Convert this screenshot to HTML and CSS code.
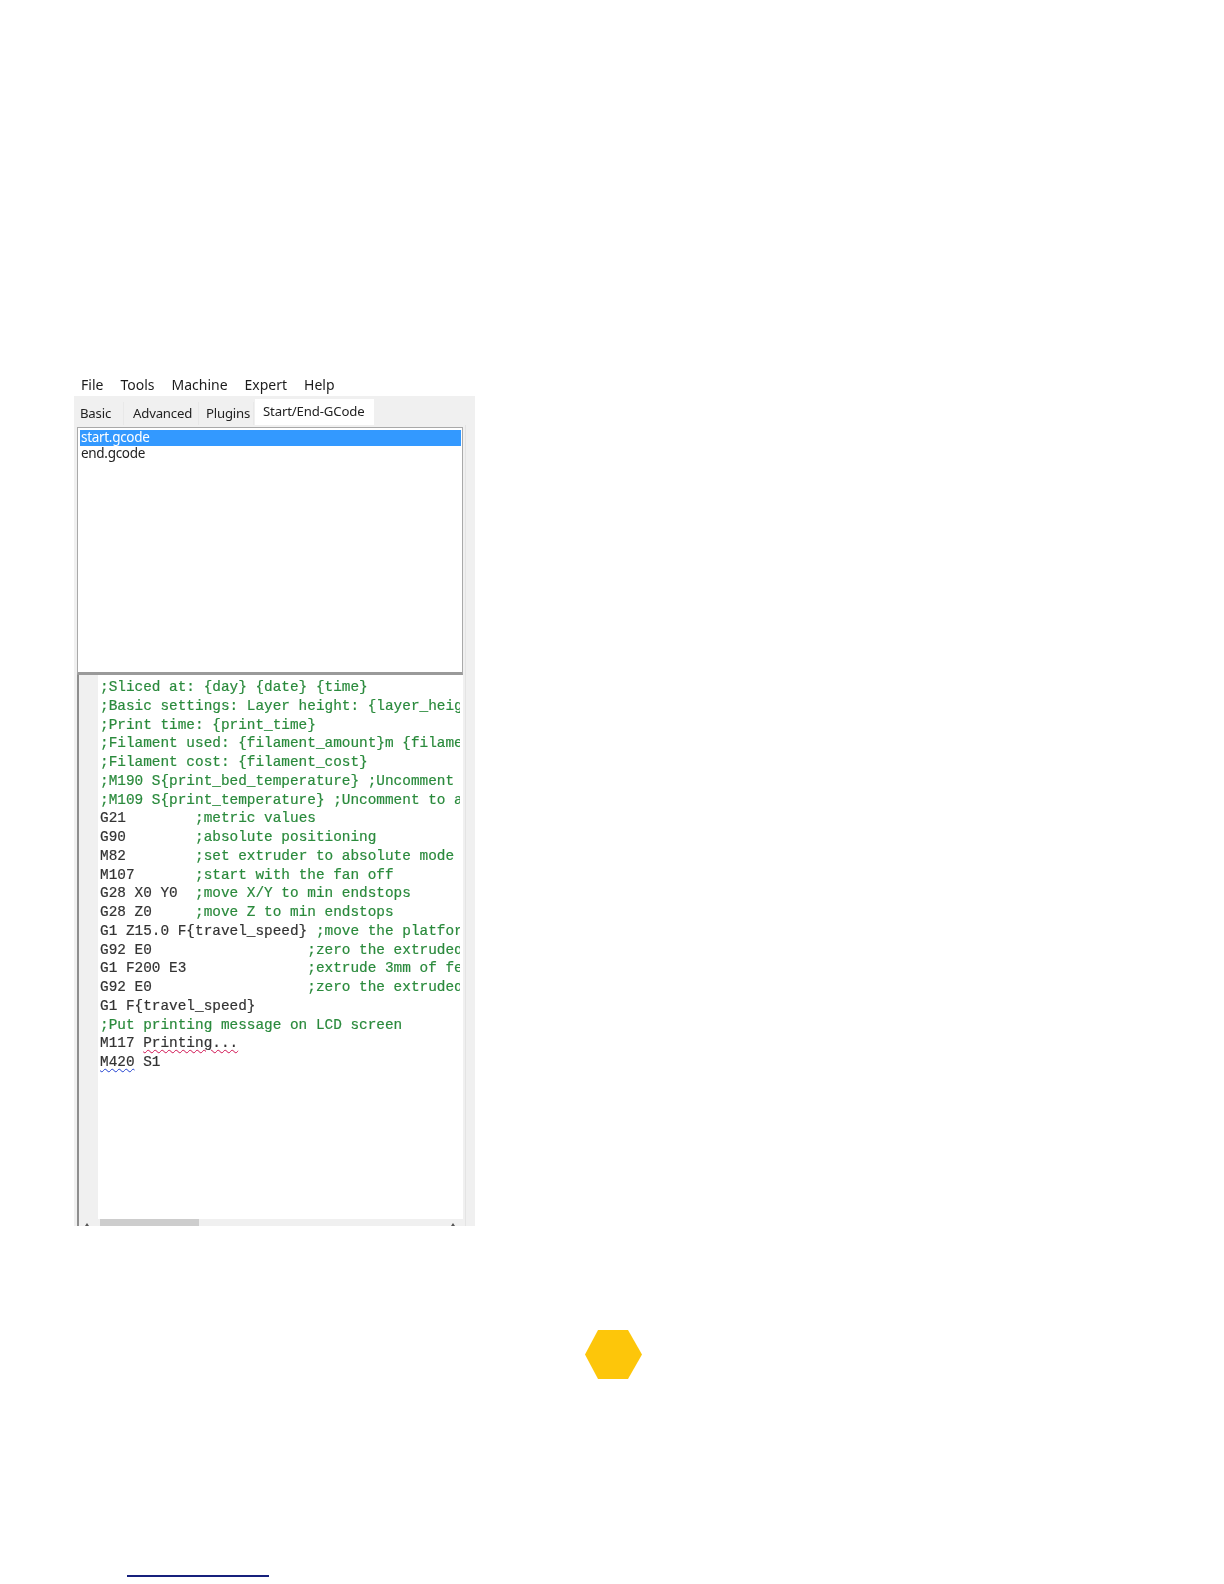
FILE: index.html
```html
<!DOCTYPE html>
<html lang="en">
<head>
<meta charset="utf-8">
<title>Start/End-GCode</title>
<link rel="stylesheet" href="styles.css">
</head>
<body>
<main class="page">
  <section class="shot">
    <nav class="menu">
      <span>File</span><span>Tools</span><span>Machine</span><span>Expert</span><span>Help</span>
    </nav>
    <div class="window">
      <div class="tabs">
        <div class="tab tab-basic">Basic</div>
        <div class="tab tab-advanced">Advanced</div>
        <div class="tab tab-plugins">Plugins</div>
        <div class="tab tab-active">Start/End-GCode</div>
      </div>
      <div class="pane">
        <ul class="files">
          <li class="file selected">start.gcode</li>
          <li class="file">end.gcode</li>
        </ul>
        <div class="editor">
          <div class="gutter"></div>
          <div class="code-wrap">
            <div class="code">
              <div class="line c">;Sliced at: {day} {date} {time}</div>
              <div class="line c">;Basic settings: Layer height: {layer_height}</div>
              <div class="line c">;Print time: {print_time}</div>
              <div class="line c">;Filament used: {filament_amount}m {filament_weight}</div>
              <div class="line c">;Filament cost: {filament_cost}</div>
              <div class="line c">;M190 S{print_bed_temperature} ;Uncomment to</div>
              <div class="line c">;M109 S{print_temperature} ;Uncomment to add</div>
              <div class="line">G21        <span class="c">;metric values</span></div>
              <div class="line">G90        <span class="c">;absolute positioning</span></div>
              <div class="line">M82        <span class="c">;set extruder to absolute mode</span></div>
              <div class="line">M107       <span class="c">;start with the fan off</span></div>
              <div class="line">G28 X0 Y0  <span class="c">;move X/Y to min endstops</span></div>
              <div class="line">G28 Z0     <span class="c">;move Z to min endstops</span></div>
              <div class="line">G1 Z15.0 F{travel_speed} <span class="c">;move the platform</span></div>
              <div class="line">G92 E0                  <span class="c">;zero the extruded</span></div>
              <div class="line">G1 F200 E3              <span class="c">;extrude 3mm of feed</span></div>
              <div class="line">G92 E0                  <span class="c">;zero the extruded</span></div>
              <div class="line">G1 F{travel_speed}</div>
              <div class="line c">;Put printing message on LCD screen</div>
              <div class="line">M117 <span class="sq-red">Printing...</span></div>
              <div class="line"><span class="sq-blue">M420</span> S1</div>
            </div>
            <div class="hscroll">
              <span class="arrow arrow-l"></span>
              <div class="track"><div class="thumb"></div></div>
              <span class="arrow arrow-r"></span>
            </div>
          </div>
        </div>
      </div>
    </div>
  </section>
  <div class="hex-row">
    <svg class="hex" width="57" height="49" viewBox="0 0 57 49" aria-hidden="true"><polygon points="0,24.5 13,0 43,0 57,24.5 43,49 13,49" fill="#fdc60a"/></svg>
  </div>
  <div class="rule"></div>
</main>
</body>
</html>
```
FILE: styles.css
```css
* { box-sizing: border-box; }
html, body { margin: 0; padding: 0; background: #fff; }
.page { width: 1224px; height: 1584px; overflow: hidden; padding-top: 375px; }

.shot { width: 401px; margin-left: 74px; height: 851px; display: flex; flex-direction: column; overflow: hidden; font-family: "Noto Sans", sans-serif; font-size: 14px; color: #222; filter: blur(0.35px); }

.menu { height: 21px; display: flex; gap: 17px; padding: 3px 0 0 7px; line-height: 14px; align-items: flex-start; color: #1c1c1c; }

.window { flex: 1; min-height: 0; background: #f0f0f0; display: flex; flex-direction: column; }

.tabs { height: 29px; display: flex; align-items: flex-end; gap: 1px; padding-top: 3px; flex: none; font-size: 13.2px; }
.tab { height: 23px; background: #f0f0f0; padding-left: 6px; line-height: 23px; letter-spacing: -0.2px; border-right: 1px solid #e8e8e8; }
.tab-basic { width: 50px; }
.tab-advanced { width: 74px; padding-left: 8px; }
.tab-plugins { width: 54px; padding-left: 6px; }
.tab-active { width: 119px; height: 26px; background: #fff; padding-left: 8px; line-height: 25px; border: 0; letter-spacing: -0.15px; }

.pane { flex: 1; min-height: 0; margin: 0 9px 0 3px; padding-right: 2px; border-right: 1px solid #e4e4e4; background: #f0f0f0; display: flex; flex-direction: column; }

.files { list-style: none; margin: 2px 0 0; padding: 2px 1px 0 2px; height: 248px; flex: none; background: #fff; border: 1px solid #a9a9a9; border-bottom: 3px solid #9a9a9a; font-size: 13.5px; }
.file { height: 16px; line-height: 14px; padding-left: 1px; letter-spacing: -0.3px; }
.selected { background: #3399ff; color: #fff; }

.editor { flex: 1; min-height: 0; display: flex; background: #fff; border-left: 2px solid #8e8e8e; }
.gutter { width: 19px; flex: none; background: #f0f0f0; }
.code-wrap { flex: 1; min-width: 0; display: flex; flex-direction: column; }
.code { flex: 1; min-height: 0; overflow: hidden; margin: 0 3px 0 2px; padding-top: 3px; font-family: "Liberation Mono", monospace; font-size: 14.4px; color: #333; -webkit-text-stroke: 0.2px currentColor; }
.line { height: 18.75px; line-height: 18.75px; white-space: pre; }
.c { color: #2a8a3c; }
.sq-red { text-decoration: underline wavy #d01050 1px; text-underline-offset: 2px; }
.sq-blue { text-decoration: underline wavy #2040d0 1px; text-underline-offset: 2px; }

.hscroll { height: 7px; flex: none; display: flex; background: #f0f0f0; margin-left: -19px; position: relative; }
.track { flex: 1; margin-left: 21px; }
.thumb { width: 99px; height: 7px; background: #cdcdcd; }
.arrow { position: absolute; top: 4px; width: 0; height: 0; border-bottom: 3px solid #555; border-left: 2px solid transparent; border-right: 2px solid transparent; }
.arrow-l { left: 6px; }
.arrow-r { right: 8px; }

.hex-row { display: flex; justify-content: center; margin-top: 104px; padding-left: 3px; }
.hex { display: block; }

.rule { width: 142px; height: 1.5px; margin: 196px 0 0 127px; background: #16207c; }
```
